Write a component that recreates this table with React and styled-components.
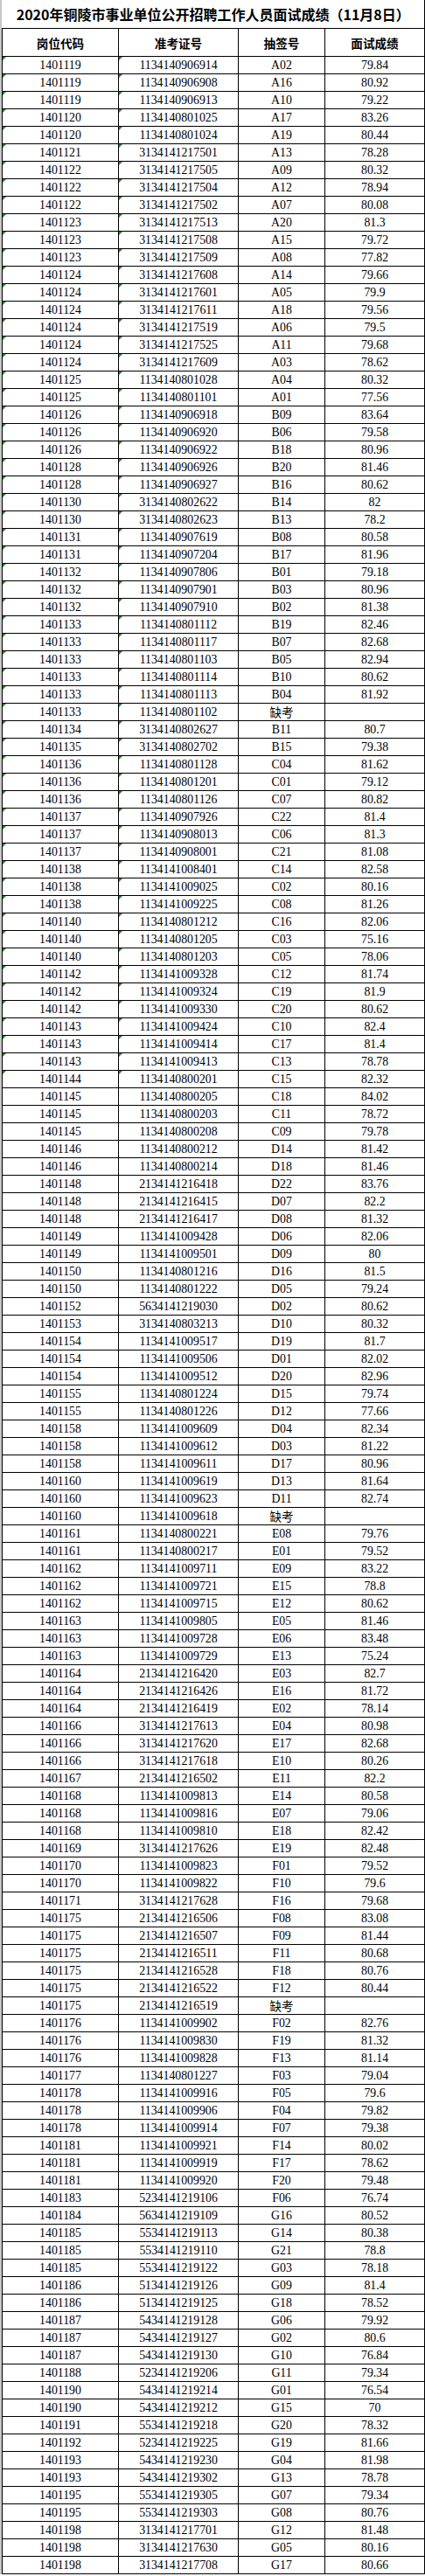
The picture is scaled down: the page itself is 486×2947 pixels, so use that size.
import styled, { createGlobalStyle } from "styled-components";

const RAW = `1401119 1134140906914 A02 79.84
1401119 1134140906908 A16 80.92
1401119 1134140906913 A10 79.22
1401120 1134140801025 A17 83.26
1401120 1134140801024 A19 80.44
1401121 3134141217501 A13 78.28
1401122 3134141217505 A09 80.32
1401122 3134141217504 A12 78.94
1401122 3134141217502 A07 80.08
1401123 3134141217513 A20 81.3
1401123 3134141217508 A15 79.72
1401123 3134141217509 A08 77.82
1401124 3134141217608 A14 79.66
1401124 3134141217601 A05 79.9
1401124 3134141217611 A18 79.56
1401124 3134141217519 A06 79.5
1401124 3134141217525 A11 79.68
1401124 3134141217609 A03 78.62
1401125 1134140801028 A04 80.32
1401125 1134140801101 A01 77.56
1401126 1134140906918 B09 83.64
1401126 1134140906920 B06 79.58
1401126 1134140906922 B18 80.96
1401128 1134140906926 B20 81.46
1401128 1134140906927 B16 80.62
1401130 3134140802622 B14 82
1401130 3134140802623 B13 78.2
1401131 1134140907619 B08 80.58
1401131 1134140907204 B17 81.96
1401132 1134140907806 B01 79.18
1401132 1134140907901 B03 80.96
1401132 1134140907910 B02 81.38
1401133 1134140801112 B19 82.46
1401133 1134140801117 B07 82.68
1401133 1134140801103 B05 82.94
1401133 1134140801114 B10 80.62
1401133 1134140801113 B04 81.92
1401133 1134140801102 缺考
1401134 3134140802627 B11 80.7
1401135 3134140802702 B15 79.38
1401136 1134140801128 C04 81.62
1401136 1134140801201 C01 79.12
1401136 1134140801126 C07 80.82
1401137 1134140907926 C22 81.4
1401137 1134140908013 C06 81.3
1401137 1134140908001 C21 81.08
1401138 1134141008401 C14 82.58
1401138 1134141009025 C02 80.16
1401138 1134141009225 C08 81.26
1401140 1134140801212 C16 82.06
1401140 1134140801205 C03 75.16
1401140 1134140801203 C05 78.06
1401142 1134141009328 C12 81.74
1401142 1134141009324 C19 81.9
1401142 1134141009330 C20 80.62
1401143 1134141009424 C10 82.4
1401143 1134141009414 C17 81.4
1401143 1134141009413 C13 78.78
1401144 1134140800201 C15 82.32
1401145 1134140800205 C18 84.02
1401145 1134140800203 C11 78.72
1401145 1134140800208 C09 79.78
1401146 1134140800212 D14 81.42
1401146 1134140800214 D18 81.46
1401148 2134141216418 D22 83.76
1401148 2134141216415 D07 82.2
1401148 2134141216417 D08 81.32
1401149 1134141009428 D06 82.06
1401149 1134141009501 D09 80
1401150 1134140801216 D16 81.5
1401150 1134140801222 D05 79.24
1401152 5634141219030 D02 80.62
1401153 3134140803213 D10 80.32
1401154 1134141009517 D19 81.7
1401154 1134141009506 D01 82.02
1401154 1134141009512 D20 82.96
1401155 1134140801224 D15 79.74
1401155 1134140801226 D12 77.66
1401158 1134141009609 D04 82.34
1401158 1134141009612 D03 81.22
1401158 1134141009611 D17 80.96
1401160 1134141009619 D13 81.64
1401160 1134141009623 D11 82.74
1401160 1134141009618 缺考
1401161 1134140800221 E08 79.76
1401161 1134140800217 E01 79.52
1401162 1134141009711 E09 83.22
1401162 1134141009721 E15 78.8
1401162 1134141009715 E12 80.62
1401163 1134141009805 E05 81.46
1401163 1134141009728 E06 83.48
1401163 1134141009729 E13 75.24
1401164 2134141216420 E03 82.7
1401164 2134141216426 E16 81.72
1401164 2134141216419 E02 78.14
1401166 3134141217613 E04 80.98
1401166 3134141217620 E17 82.68
1401166 3134141217618 E10 80.26
1401167 2134141216502 E11 82.2
1401168 1134141009813 E14 80.58
1401168 1134141009816 E07 79.06
1401168 1134141009810 E18 82.42
1401169 3134141217626 E19 82.48
1401170 1134141009823 F01 79.52
1401170 1134141009822 F10 79.6
1401171 3134141217628 F16 79.68
1401175 2134141216506 F08 83.08
1401175 2134141216507 F09 81.44
1401175 2134141216511 F11 80.68
1401175 2134141216528 F18 80.76
1401175 2134141216522 F12 80.44
1401175 2134141216519 缺考
1401176 1134141009902 F02 82.76
1401176 1134141009830 F19 81.32
1401176 1134141009828 F13 81.14
1401177 1134140801227 F03 79.04
1401178 1134141009916 F05 79.6
1401178 1134141009906 F04 79.82
1401178 1134141009914 F07 79.38
1401181 1134141009921 F14 80.02
1401181 1134141009919 F17 78.62
1401181 1134141009920 F20 79.48
1401183 5234141219106 F06 76.74
1401184 5634141219109 G16 80.52
1401185 5534141219113 G14 80.38
1401185 5534141219110 G21 78.8
1401185 5534141219122 G03 78.18
1401186 5134141219126 G09 81.4
1401186 5134141219125 G18 78.52
1401187 5434141219128 G06 79.92
1401187 5434141219127 G02 80.6
1401187 5434141219130 G10 76.84
1401188 5234141219206 G11 79.34
1401190 5434141219214 G01 76.54
1401190 5434141219212 G15 70
1401191 5534141219218 G20 78.32
1401192 5234141219225 G19 81.66
1401193 5434141219230 G04 81.98
1401193 5434141219302 G13 78.78
1401195 5534141219305 G07 79.34
1401195 5534141219303 G08 80.76
1401198 3134141217701 G12 81.48
1401198 3134141217630 G05 80.16
1401198 3134141217708 G17 80.66`;

const rows = RAW.split("\n").map((line) => line.trim().split(" "));

// rows that still carry excel's "number stored as text" marker
const FLAGGED = 59;

const GlobalStyle = createGlobalStyle`
  body {
    margin: 0;
    background: #fff;
  }
`;

const Page = styled.div`
  width: 484px;
  border-left: 2px solid #c8c8c8;
  background: #fff;
`;

const Sheet = styled.table`
  border-collapse: collapse;
  table-layout: fixed;
  width: 483px;
`;

const Col = styled.col`
  width: ${(p) => p.$w}px;
`;

const Title = styled.th`
  height: 32px;
  padding: 0;
  border-right: 1px solid #000;
  font-family: "Noto Sans CJK SC", "Liberation Sans", sans-serif;
  font-size: 16px;
  font-weight: 700;
  line-height: 20px;
  color: #000;
  text-align: center;
  vertical-align: middle;
`;

const Head = styled.th`
  height: 31px;
  padding: 0;
  border: 1px solid #000;
  font-family: "Noto Sans CJK SC", sans-serif;
  font-size: 13.6px;
  font-weight: 700;
  line-height: 18px;
  color: #000;
  text-align: center;
  vertical-align: middle;
`;

const Row = styled.tr`
  height: 20px;
`;

const Cell = styled.td`
  position: relative;
  padding: 0;
  border: 1px solid #000;
  font-family: "Liberation Serif", "Noto Sans CJK SC", serif;
  font-size: 13.8px;
  line-height: 16px;
  color: #000;
  text-align: center;
  vertical-align: middle;
  white-space: nowrap;
  overflow: hidden;

  &::before {
    content: "";
    display: ${(p) => (p.$flag ? "block" : "none")};
    position: absolute;
    left: 0;
    top: 0;
    border-top: 4px solid #1e8a1e;
    border-right: 4px solid transparent;
  }
`;

const Absent = styled.span`
  font-family: "Noto Sans CJK SC", sans-serif;
  font-size: 13.5px;
`;

export default function App() {
    return (
        <Page>
            <GlobalStyle/>
            <Sheet>
                <colgroup>
                    <Col $w={133}/>
                    <Col $w={137}/>
                    <Col $w={99}/>
                    <Col $w={114}/>
                </colgroup>
                <thead>
                <tr>
                    <Title colSpan={4}>2020年铜陵市事业单位公开招聘工作人员面试成绩（11月8日）</Title>
                </tr>
                <tr>
                    <Head>岗位代码</Head>
                    <Head>准考证号</Head>
                    <Head>抽签号</Head>
                    <Head>面试成绩</Head>
                </tr>
                </thead>
                <tbody>
                {rows.map(([post, ticket, lot, score], i) => (
                    <Row key={ticket}>
                        <Cell $flag={i < FLAGGED}>{post}</Cell>
                        <Cell $flag={i < FLAGGED}>{ticket}</Cell>
                        <Cell>{lot === "缺考" ? <Absent>缺考</Absent> : lot}</Cell>
                        <Cell>{score || ""}</Cell>
                    </Row>
                ))}
                </tbody>
            </Sheet>
        </Page>
    );
}
